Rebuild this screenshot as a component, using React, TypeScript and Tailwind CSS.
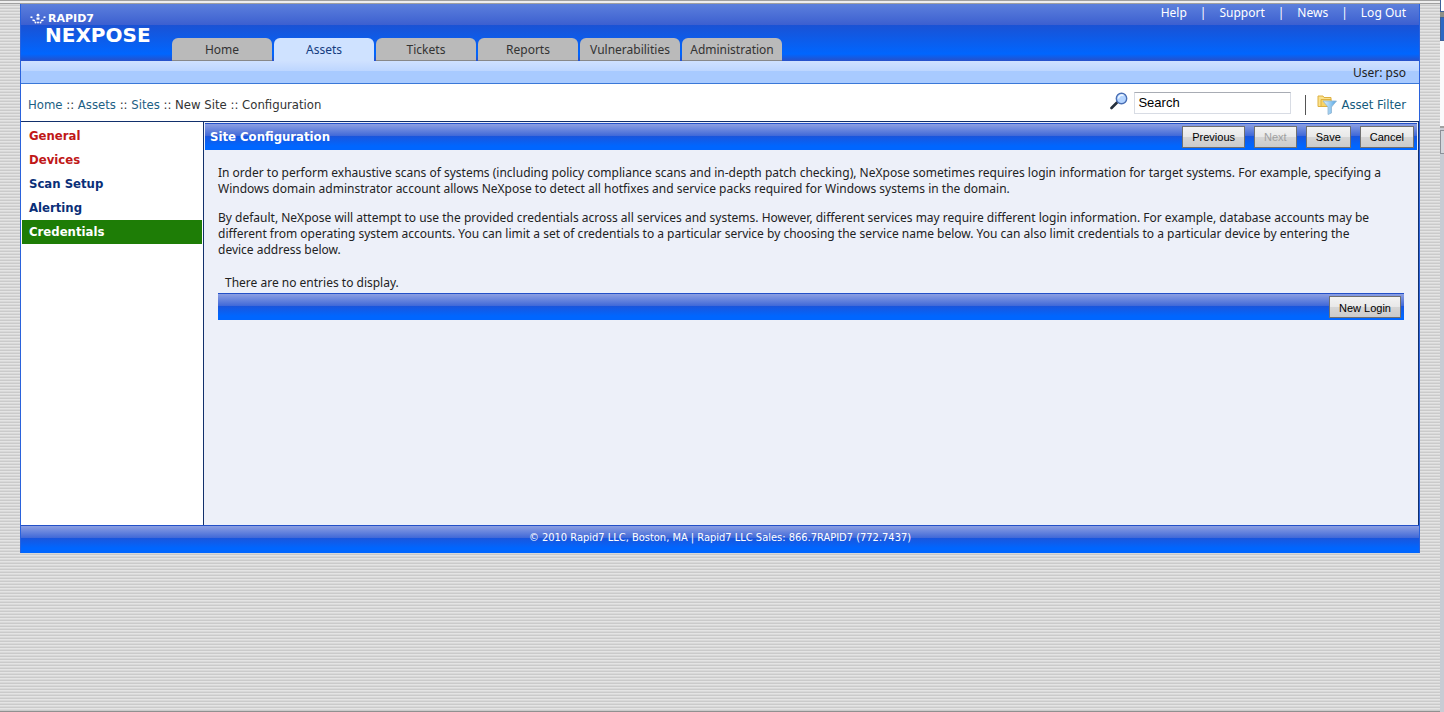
import { clsx } from "clsx";

const topLinks = ["Help", "Support", "News", "Log Out"];

const tabs = ["Home", "Assets", "Tickets", "Reports", "Vulnerabilities", "Administration"];

const steps = [
  { label: "General", color: "text-[#c01818]" },
  { label: "Devices", color: "text-[#c01818]" },
  { label: "Scan Setup", color: "text-[#0a2f78]" },
  { label: "Alerting", color: "text-[#0a2f78]" },
  { label: "Credentials", color: "bg-[#1e7d06] text-white" },
];

const wideFont = "font-['DejaVu_Sans_Condensed','DejaVu_Sans',sans-serif]";

const barClass =
  "border-t border-[#2350c8] bg-[linear-gradient(#8c9fe2_0,#3f68d8_12px,#1a55dc_12px,#0066ff_22px)]";

const Logo = () => (
  <a href="#" aria-label="Rapid7 NeXpose" className="mt-2 ml-2 w-32 shrink-0 text-white">
    <svg viewBox="0 0 128 34" className="h-[34px] w-32" fill="currentColor">
      <circle cx="9" cy="3.2" r="1.4" />
      <rect x="7.5" y="5.5" width="3" height="2.2" />
      <path d="M1.5 5l2 .6M16.5 5l-2 .6M3.5 8l2.5.8M14.5 8l-2.5.8" stroke="currentColor" strokeWidth="1.6" />
      <circle cx="6.5" cy="10.5" r="1" />
      <circle cx="11.5" cy="10.5" r="1" />
      <circle cx="9" cy="10.5" r="1" />
      <text x="19" y="10" fontSize="11" fontWeight="700" fontFamily="DejaVu Sans">RAPID7</text>
      <text x="16" y="30" fontSize="20" fontWeight="700" fontFamily="DejaVu Sans">NEXPOSE</text>
    </svg>
  </a>
);

const SearchIcon = () => (
  <svg viewBox="0 0 18 18" className="mb-1 h-[18px] w-[18px]">
    <path d="M1.5 16 L7 10.5" stroke="#26303c" strokeWidth="2.6" strokeLinecap="round" />
    <circle cx="11.5" cy="6.5" r="5.2" fill="#b4d4ff" stroke="#4a6fb4" strokeWidth="1.4" />
    <path d="M8.5 6.5a3.4 3.4 0 0 1 5-3" fill="none" stroke="#eef6ff" strokeWidth="1.6" />
  </svg>
);

const FilterIcon = () => (
  <svg viewBox="0 0 20 20" className="h-5 w-5">
    <defs>
      <linearGradient id="funnel">
        <stop offset="0" stopColor="#e8f5ff" />
        <stop offset="1" stopColor="#4ea4e4" />
      </linearGradient>
    </defs>
    <path d="M1 1h5l1 1.500h7v9H1z" fill="#fbe28c" stroke="#deb040" />
    <path d="M4 4.500h10v7H4z" fill="#f8d468" stroke="#deb040" />
    <path d="M6 6h13.500l-5 6v6l-3.500 1.500v-7.500z" fill="url(#funnel)" stroke="#8fb4d0" strokeWidth=".8" />
  </svg>
);

const PushButton = ({ label, disabled }: { label: string; disabled?: boolean }) => (
  <button
    disabled={disabled}
    className="h-[22px] border border-[#707070] bg-[linear-gradient(#f3f3f3,#e8e8e8_50%,#d6d6d6_50%,#cbcbcb)] px-[9px] pt-px font-['Liberation_Sans',sans-serif] text-[11px] text-black disabled:text-[#a0a0a0]"
  >
    {label}
  </button>
);

// sliver of the browser scrollbar on the far right
const ScrollStrip = () => (
  <div className="flex w-1 flex-col bg-[#c8ccd4]">
    <div className="h-3 border-b border-l border-[#3c5f98] bg-white" />
    <div className="h-[5px] bg-[#8c9088]" />
    <div className="h-6 border-y border-l border-[#3c5f98] bg-[#2c68c4]" />
    <div className="h-[85px] bg-[#fafafc]" />
    <div className="h-[2px] bg-[#a0a0a0]" />
    <div className="mt-[2px] h-6 border-y border-l border-[#8c9098] bg-[#d4d6dc]" />
  </div>
);

const App = () => {
  return (
    <div className="flex min-h-screen bg-[repeating-linear-gradient(#e4e4e4_0_1px,#d8d8d8_1px_2px,#cacaca_2px_3px)] font-['Noto_Sans',sans-serif] text-[12px] text-[#222]">
      <div className="flex min-w-0 flex-1 flex-col border-b border-[#909090]">
        <div className="h-1 border-y border-[#a0a0a0] bg-[#eee]" />
        <div className="mx-5 border-x border-[#2a62dc]">
          <header className="flex h-[57px] bg-[linear-gradient(#5c80dc_0,#3c5fd0_21px,#1a52d4_21px,#0066ff_50px,#2850c8_57px)]">
            <Logo />
            <nav className="ml-[15px] flex gap-[2px] self-end">
              {tabs.map((tab) => (
                <a
                  key={tab}
                  href="#"
                  className={clsx(
                    "h-[23px] w-[100px] rounded-t-md text-center leading-6",
                    tab === "Assets" ? "bg-[#cfe2ff] text-[#143c80]" : "border-b border-[#888] bg-[#bababa] text-[#333]"
                  )}
                >
                  {tab}
                </a>
              ))}
            </nav>
            <div className="mr-[13px] ml-auto flex gap-[13px] leading-[18px] text-white">
              {topLinks.map((link, index) => (
                <span key={link} className="flex gap-[13px]">
                  {index > 0 && <span>|</span>}
                  <a href="#">{link}</a>
                </span>
              ))}
            </div>
          </header>
          <div className="h-[23px] border-b border-[#3a78d8] bg-[linear-gradient(#cfe1ff_0,#bdd6ff_10px,#a8caff_10px)] pr-[13px] text-right leading-6">
            User: pso
          </div>
          <div className={clsx("flex h-[38px] items-center border-b border-[#12306c] bg-white pr-[13px] pl-[7px] text-[13px]", wideFont)}>
            <div className="flex-1 pt-1 text-[#1c6084]">
              <a href="#">Home</a>
              <span className="text-[#333]"> :: </span>
              <a href="#">Assets</a>
              <span className="text-[#333]"> :: </span>
              <a href="#">Sites</a>
              <span className="text-[#333]"> :: New Site :: Configuration</span>
            </div>
            <SearchIcon />
            <input
              aria-label="Search"
              defaultValue="Search"
              className="ml-[6px] h-[22px] w-[157px] border border-[#d8dce4] border-t-[#a8acb4] bg-white px-[3px] font-['Liberation_Sans',sans-serif] text-[13px] text-black"
            />
            <div className="mt-1 ml-[14px] h-5 w-px bg-[#555]" />
            <a href="#" className="mt-1 ml-[11px] flex items-center gap-1 text-[#145a7c]">
              <FilterIcon />
              Asset Filter
            </a>
          </div>
          <div className="flex min-h-[403px] bg-white">
            <aside className={clsx("w-[183px] shrink-0 border-r border-[#12306c] px-px pt-[2px] text-[13px]", wideFont)}>
              {steps.map((step) => (
                <a key={step.label} href="#" className={clsx("block px-[7px] leading-6 font-bold", step.color)}>
                  {step.label}
                </a>
              ))}
            </aside>
            <main className="flex-1 border-r border-[#12306c] bg-[#edf0f9]">
              <div className={clsx("mx-px mt-px flex h-[27px] items-center justify-between pr-[3px] pl-[5px]", barClass)}>
                <h1 className={clsx("text-[13px] font-bold text-white", wideFont)}>Site Configuration</h1>
                <div className="flex gap-[9px]">
                  <PushButton label="Previous" />
                  <PushButton label="Next" disabled />
                  <PushButton label="Save" />
                  <PushButton label="Cancel" />
                </div>
              </div>
              <div className="px-[14px] pt-[15px] leading-4">
                <p>
                  In order to perform exhaustive scans of systems (including policy compliance scans and in-depth patch checking), NeXpose sometimes requires login information for target systems. For example, specifying a Windows domain adminstrator account allows NeXpose to detect all hotfixes and service packs required for Windows systems in the domain.
                </p>
                <p className="mt-[13px] pr-5">
                  By default, NeXpose will attempt to use the provided credentials across all services and systems. However, different services may require different login information. For example, database accounts may be different from operating system accounts. You can limit a set of credentials to a particular service by choosing the service name below. You can also limit credentials to a particular device by entering the device address below.
                </p>
                <p className="mt-[17px] px-[7px]">There are no entries to display.</p>
                <div className={clsx("mt-[2px] flex h-[27px] items-center justify-end pr-[3px]", barClass)}>
                  <PushButton label="New Login" />
                </div>
              </div>
            </main>
          </div>
          <footer className={clsx("h-[28px] text-center text-[11px] leading-6 text-white", barClass, wideFont)}>
            © 2010 Rapid7 LLC, Boston, MA | Rapid7 LLC Sales: 866.7RAPID7 (772.7437)
          </footer>
        </div>
      </div>
      <ScrollStrip />
    </div>
  );
};

export default App;
